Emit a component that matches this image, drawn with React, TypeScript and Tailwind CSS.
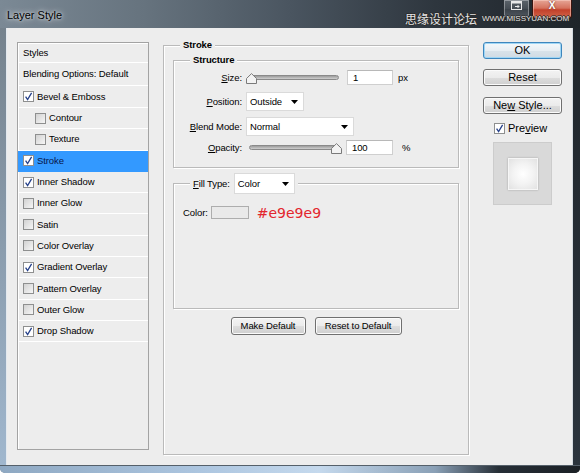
import React from 'react';

type Layer = { label: string; checked?: boolean; indent?: boolean; selected?: boolean };

const layers: Layer[] = [
  { label: 'Bevel & Emboss', checked: true },
  { label: 'Contour', indent: true },
  { label: 'Texture', indent: true },
  { label: 'Stroke', checked: true, selected: true },
  { label: 'Inner Shadow', checked: true },
  { label: 'Inner Glow' },
  { label: 'Satin' },
  { label: 'Color Overlay' },
  { label: 'Gradient Overlay', checked: true },
  { label: 'Pattern Overlay' },
  { label: 'Outer Glow' },
  { label: 'Drop Shadow', checked: true },
];

function Check({ checked }: { checked?: boolean }) {
  return (
    <span
      className={`inline-flex w-[11px] h-[11px] shrink-0 items-center justify-center border border-[#8e8f8f] ${
        checked ? 'bg-white' : 'bg-[linear-gradient(135deg,#d2d2d2,#f6f6f6)]'
      }`}
    >
      {checked && (
        <svg width="9" height="9" viewBox="0 0 9 9">
          <path d="M1.6 4.6 L3.6 7.6 L7.6 0.8" fill="none" stroke="#26418a" strokeWidth="1.3" />
        </svg>
      )}
    </span>
  );
}

function Arrow() {
  return (
    <svg width="7" height="4" viewBox="0 0 7 4">
      <path d="M0 0H7L3.5 4Z" fill="#000" />
    </svg>
  );
}

function Select({ className, text }: { className: string; text: string }) {
  return (
    <div className={`flex items-center justify-between bg-white border border-[#dadada] pl-[3px] pr-[5px] ${className}`}>
      <span>{text}</span>
      <Arrow />
    </div>
  );
}

function Slider({ right }: { right?: boolean }) {
  return (
    <div className="relative w-[96px] h-[12px] flex items-center">
      <div
        className={`h-[5px] w-[91px] rounded-[3px] border border-[#8a8a8a] bg-[linear-gradient(#9c9c9c,#cfcfcf)] ${
          right ? 'ml-[3px]' : 'ml-[2px]'
        }`}
      />
      <svg
        className={`absolute top-[1px] ${right ? 'right-0' : 'left-0'}`}
        width="11"
        height="11"
        viewBox="0 0 11 11"
      >
        <path d="M5.5 0.6 L10.5 5.5 V10.5 H0.5 V5.5 Z" fill="#f3f3f3" stroke="#7a7a7a" />
      </svg>
    </div>
  );
}

function Btn({ className, children, primary }: { className: string; children: React.ReactNode; primary?: boolean }) {
  return (
    <div
      className={`flex items-center justify-center rounded-[3px] border ${
        primary
          ? 'border-[#3d86bd] bg-[linear-gradient(#f3f8fb,#e7eef3_50%,#d9e3ea_51%,#d0dbe4)] shadow-[inset_0_0_0_1px_#9fd6f5]'
          : 'border-[#707070] bg-[linear-gradient(#f3f3f3,#ebebeb_50%,#dddddd_51%,#cfcfcf)] shadow-[inset_0_0_0_1px_#fbfbfb]'
      } ${className}`}
    >
      {children}
    </div>
  );
}

const legend = 'absolute left-[16px] -top-[7px] px-[3px] bg-[#ededed] font-bold leading-[12px]';
const group = 'relative border border-[#bababa] shadow-[inset_1px_1px_0_#fff,1px_1px_0_#fff]';

function TitleBar() {
  return (
    <div className="relative h-[28px] flex items-start">
      <span className="ml-[7px] mt-[9px] text-[11px] leading-[12px] text-black [text-shadow:0_0_6px_rgba(255,255,255,0.85),0_0_3px_rgba(255,255,255,0.6)]">
        Layer Style
      </span>
      <div className="ml-auto mr-[8px] flex items-start gap-[2px]">
        <div className="w-[27px] h-[18px] pt-[1px] rounded-b-[3px] border border-t-0 border-[#2a3035] bg-[linear-gradient(#5c646b,#464d54_50%,#3a4148_51%,#4e565e)] shadow-[inset_0_0_0_1px_rgba(255,255,255,0.35)] flex items-start justify-center">
          <svg width="11" height="9" viewBox="0 0 11 9">
            <rect x="0.5" y="0.5" width="10" height="8" fill="none" stroke="#e8e8e8" />
            <rect x="0.5" y="0.5" width="10" height="2" fill="#e8e8e8" />
            <path d="M4 5.5 H8 M6.5 4 L8 5.5 L6.5 7" stroke="#e8e8e8" fill="none" />
          </svg>
        </div>
        <div className="w-[40px] h-[19px] pt-[1px] rounded-b-[4px] border border-t-0 border-[#3a1510] bg-[linear-gradient(#e6a596,#d5725e_45%,#c3412b_55%,#d0654a)] shadow-[inset_0_0_0_1px_rgba(255,220,210,0.45)] flex items-start justify-center">
          <span className="text-white font-bold text-[10px] leading-[10px] [text-shadow:0_0_2px_#5a1a10]">X</span>
        </div>
      </div>
      <div className="absolute left-[405px] top-[12px] flex items-center gap-[5px] text-[#e4e4e4] [text-shadow:1px_0_0_#2a2a2a,-1px_0_0_#2a2a2a,0_1px_0_#2a2a2a,0_-1px_0_#2a2a2a]">
        <span className="font-['Noto_Sans_CJK_SC',sans-serif] text-[12px] leading-[13px]">思缘设计论坛</span>
        <span className="text-[8px] leading-[10px] mt-[1px]">WWW.MISSYUAN.COM</span>
      </div>
    </div>
  );
}

export default function App() {
  return (
    <div className="w-[580px] h-[473px] flex flex-col overflow-hidden rounded-b-[5px] font-['Liberation_Sans',Arial,sans-serif] text-black bg-[linear-gradient(to_right,#7b8995_0%,#66737e_25%,#4a5560_50%,#2e363e_75%,#1e2429_100%)]">
      <TitleBar />
      <div className="flex h-[437px]">
        <div className="w-[7px] bg-[linear-gradient(to_bottom,#75828d,#a0b7ce)] border-r border-[#e3e9ef]" />
        <div className="w-[565px] bg-[#ededed] flex items-start text-[9.5px] leading-[12px] tracking-[-0.1px]">
          {/* Styles list */}
          <div className="ml-[10px] mt-[14px] w-[132px] h-[408px] border border-[#a3a3a3] shadow-[inset_1px_1px_0_#fff]">
            <div className="h-[20px] flex items-center pl-[5px] border-b border-white">Styles</div>
            <div className="h-[23px] flex items-center pl-[5px] border-b border-white">Blending Options: Default</div>
            {layers.map((l, i) => (
              <div
                key={l.label}
                className={`${i === 0 ? 'h-[22px]' : 'h-[21.3px]'} flex items-center border-b ${
                  l.selected ? 'bg-[#3399ff] border-[#3399ff]' : 'border-white'
                } ${l.indent ? 'pl-[17px]' : 'pl-[5px]'}`}
              >
                <Check checked={l.checked} />
                <span className={`ml-[3px] ${l.selected ? 'text-[#08164a]' : ''}`}>{l.label}</span>
              </div>
            ))}
          </div>

          {/* Stroke group */}
          <div className={`ml-[14px] mt-[17px] w-[306px] h-[410px] ${group}`}>
            <span className={legend}>Stroke</span>

            <div className={`mx-[9px] mt-[14px] h-[108px] ${group}`}>
              <span className={legend}>Structure</span>
              <div className="pt-[9px] flex flex-col">
                <div className="h-[15px] flex items-center">
                  <span className="w-[68px] text-right"><span className="underline underline-offset-1">S</span>ize:</span>
                  <div className="ml-[4px]"><Slider /></div>
                  <div className="ml-[5px] w-[46px] h-[15px] bg-white border border-[#cfcfcf] border-t-[#b8b8b8] pl-[5px] flex items-center">1</div>
                  <span className="ml-[5px]">px</span>
                </div>
                <div className="mt-[7px] h-[19px] flex items-center">
                  <span className="w-[68px] text-right"><span className="underline underline-offset-1">P</span>osition:</span>
                  <Select className="ml-[4px] w-[58px] h-[19px]" text="Outside" />
                </div>
                <div className="mt-[6px] h-[19px] flex items-center">
                  <span className="w-[68px] text-right"><span className="underline underline-offset-1">B</span>lend Mode:</span>
                  <Select className="ml-[4px] w-[108px] h-[19px]" text="Normal" />
                </div>
                <div className="mt-[4px] h-[15px] flex items-center">
                  <span className="w-[68px] text-right"><span className="underline underline-offset-1">O</span>pacity:</span>
                  <div className="ml-[4px]"><Slider right /></div>
                  <div className="ml-[4px] w-[47px] h-[15px] bg-white border border-[#cfcfcf] border-t-[#b8b8b8] pl-[5px] flex items-center">100</div>
                  <span className="ml-[9px]">%</span>
                </div>
              </div>
            </div>

            <div className={`mx-[9px] mt-[15px] h-[126px] ${group}`}>
              <div className="absolute left-[16px] -top-[11px] h-[21px] px-[3px] bg-[#ededed] flex items-center">
                <span><span className="underline underline-offset-1">F</span>ill Type:</span>
                <Select className="ml-[4px] w-[61px] h-[21px]" text="Color" />
              </div>
              <div className="mt-[22px] pl-[9px] h-[13px] flex items-center">
                <span>Color:</span>
                <div className="ml-[3px] w-[38px] h-[13px] bg-[#e9e9e9] border border-[#adadad]" />
                <span className="ml-[8px] font-['DejaVu_Sans',sans-serif] text-[14px] leading-none tracking-normal text-[#e3262d]">#e9e9e9</span>
              </div>
            </div>

            <div className="mt-[8px] flex justify-center gap-[9px]">
              <Btn className="w-[75px] h-[18px]">Make Default</Btn>
              <Btn className="w-[87px] h-[18px]">Reset to Default</Btn>
            </div>
          </div>

          {/* Right column */}
          <div className="ml-[14px] mt-[14px] w-[79px] flex flex-col text-[11px] leading-[13px] tracking-normal">
            <Btn primary className="h-[17px]">OK</Btn>
            <Btn className="mt-[10px] h-[17px]">Reset</Btn>
            <Btn className="mt-[11px] h-[17px]">
              <span>Ne<span className="underline underline-offset-1">w</span> Style...</span>
            </Btn>
            <div className="mt-[9px] h-[11px] pl-[11px] flex items-center">
              <Check checked />
              <span className="ml-[3px]">Pre<span className="underline underline-offset-1">v</span>iew</span>
            </div>
            <div className="mt-[8px] ml-[10px] w-[59px] h-[63px] bg-[#d9d9d9] border border-[#cccccc] flex items-center justify-center">
              <div className="w-[30px] h-[32px] border border-[#f6f6f6] bg-[radial-gradient(circle,#ffffff_0%,#f3f3f3_50%,#e2e2e2_100%)] shadow-[0_0_2px_rgba(0,0,0,0.25)]" />
            </div>
          </div>
        </div>
        <div className="w-[8px] bg-[linear-gradient(to_bottom,#20262c,#2b343d)] border-l border-[#d4dae0]" />
      </div>
      <div className="h-[8px] border-t border-[#55606a] bg-[linear-gradient(to_right,#8ea8c2_0%,#adc6e0_35%,#c5d9ed_55%,#8aa0b6_75%,#262e36_86%,#1b2025_100%)]" />
    </div>
  );
}
